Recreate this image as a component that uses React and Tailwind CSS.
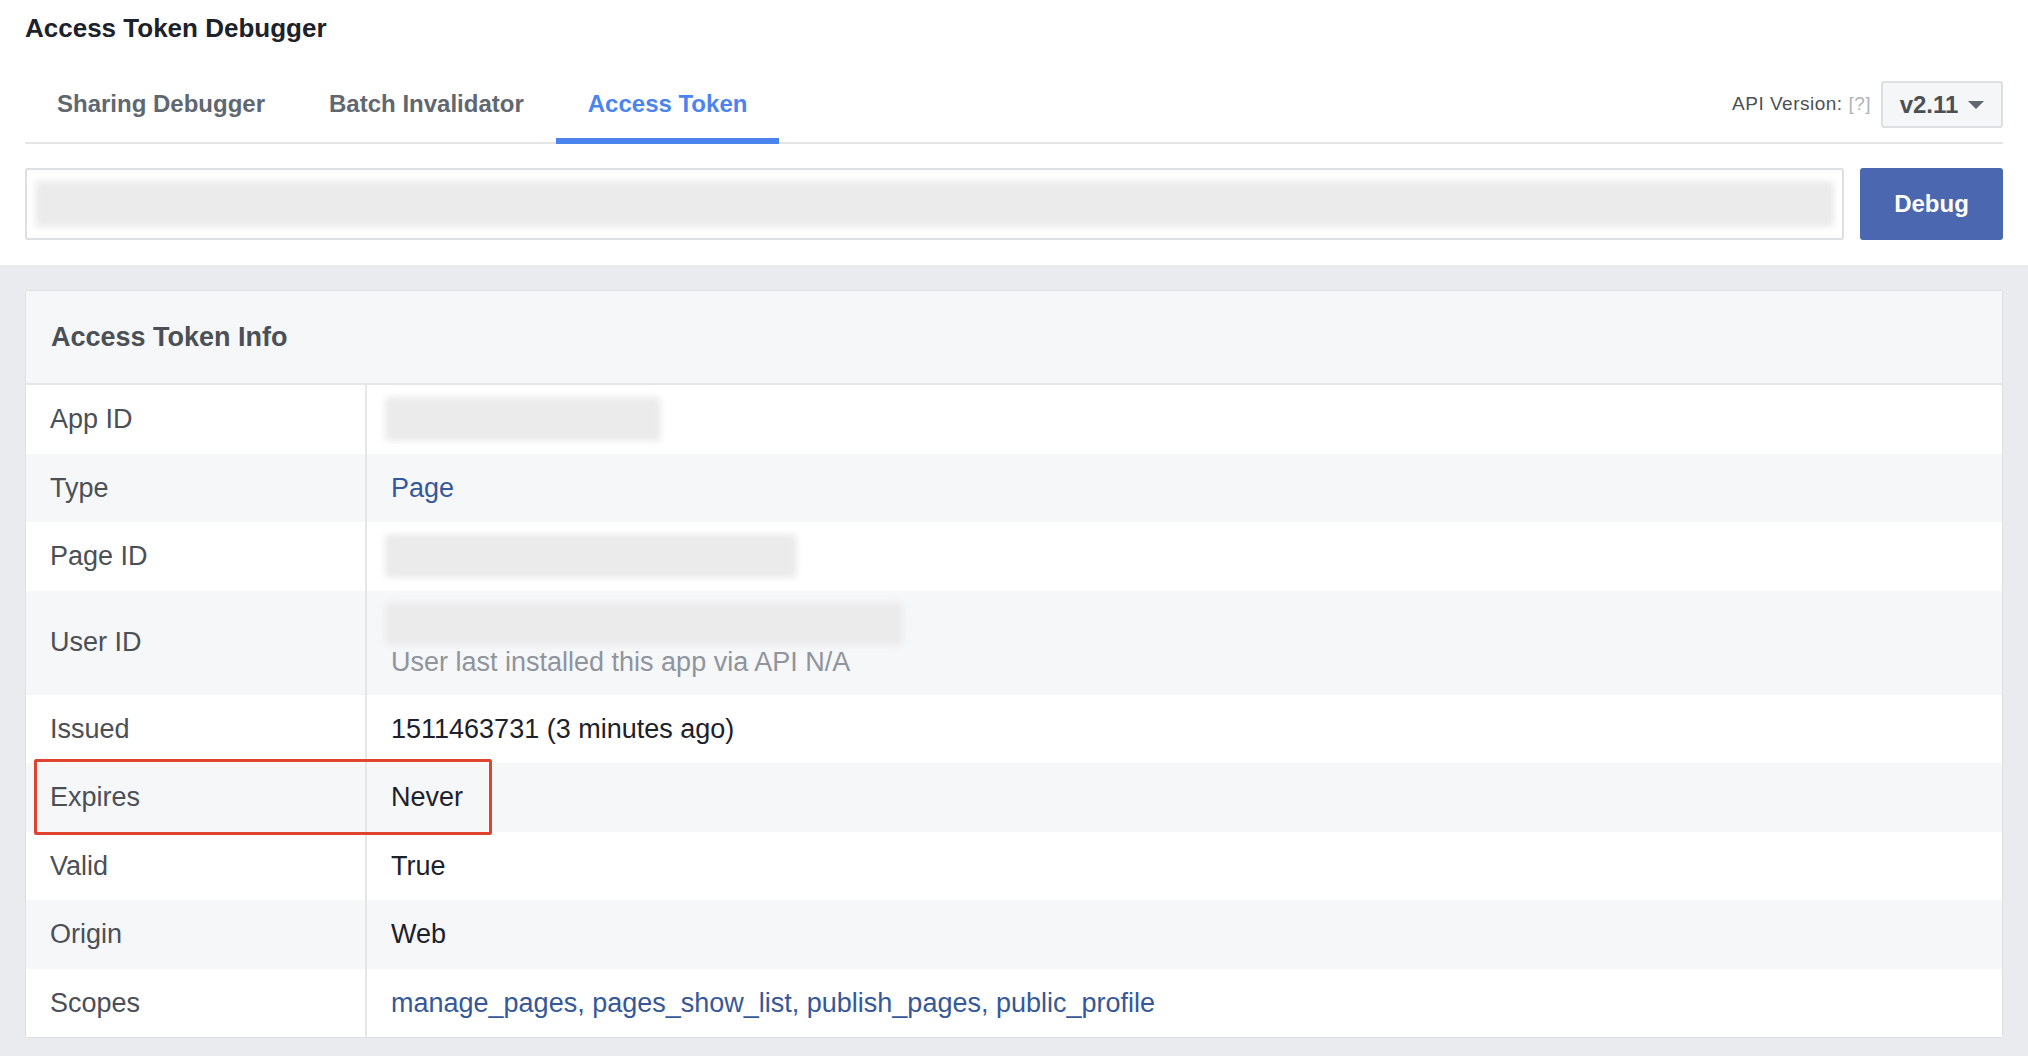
import React from "react";

const Blur = ({ w }) => (
  <div className={`h-[44px] ${w} bg-[#ebebeb] rounded-sm blur-[3px]`} />
);

const rows = [
  { label: "App ID", value: <Blur w="w-[276px]" />, blur: true },
  { label: "Type", value: <span className="text-[#365899]">Page</span> },
  { label: "Page ID", value: <Blur w="w-[412px]" />, blur: true },
  {
    label: "User ID",
    tall: true,
    blur: true,
    value: (
      <div className="flex flex-col">
        <Blur w="w-[518px]" />
        <span className="text-[#90949c] -mt-[4px] pl-[6px]">User last installed this app via API N/A</span>
      </div>
    ),
  },
  { label: "Issued", value: "1511463731 (3 minutes ago)" },
  { label: "Expires", value: "Never", marked: true },
  { label: "Valid", value: "True" },
  { label: "Origin", value: "Web" },
  {
    label: "Scopes",
    value: <span className="text-[#365899]">manage_pages, pages_show_list, publish_pages, public_profile</span>,
  },
];

export default function App() {
  return (
    <div
      className="w-[2028px] h-[1056px] bg-[#e9ebee] text-[#1d2129]"
      style={{ fontFamily: '"Liberation Sans", Arial, sans-serif' }}
    >
      <div className="bg-white px-[25px] pb-[25px]">
        <h1 className="text-[26px] font-bold pt-[12px] h-[62px] leading-[32px]">Access Token Debugger</h1>
        <div className="flex items-end justify-between border-b-2 border-[#e5e5e5] h-[82px]">
          <div className="flex text-[24px] font-bold text-[#606770]">
            <div className="px-[32px] pb-[20px]">Sharing Debugger</div>
            <div className="px-[32px] pb-[20px]">Batch Invalidator</div>
            <div className="px-[32px] pb-[16px] text-[#4c84ef] border-b-[6px] border-[#4c84ef] -mb-[2px]">Access Token</div>
          </div>
          <div className="flex items-center gap-[10px] mb-[14px]">
            <span className="text-[19px] text-[#4b4f56] tracking-[0.5px]">
              API Version: <span className="text-[#b0b3b8]">[?]</span>
            </span>
            <div className="w-[122px] h-[47px] border-2 border-[#dddfe2] rounded-[3px] bg-[#f5f6f7] flex items-center justify-center gap-[10px]">
              <span className="text-[24px] font-bold text-[#4b4f56]">v2.11</span>
              <span className="w-0 h-0 border-l-[8px] border-r-[8px] border-t-[8px] border-l-transparent border-r-transparent border-t-[#606770]" />
            </div>
          </div>
        </div>
        <div className="flex gap-[16px] mt-[24px]">
          <div className="flex-1 h-[72px] border-2 border-[#dddfe2] rounded-[3px] flex items-center px-[8px]">
            <div className="w-full h-[46px] bg-[#ebebeb] blur-[3px]" />
          </div>
          <button className="w-[143px] h-[72px] bg-[#4b67af] rounded-[3px] text-white text-[24px] font-bold">Debug</button>
        </div>
      </div>
      <div className="px-[25px] pt-[25px]">
        <div className="bg-white border border-[#dddfe2] rounded-[3px]">
          <div className="h-[94px] bg-[#f6f7f9] border-b-2 border-[#e5e6e9] flex items-center px-[25px] text-[27px] font-bold text-[#4b4f56]">
            Access Token Info
          </div>
          {rows.map((r, i) => (
            <div
              key={r.label}
              className={`relative flex text-[27px] ${i % 2 ? "bg-[#f6f7f9]" : "bg-white"} ${r.tall ? "h-[104px]" : "h-[68.5px]"}`}
            >
              <div className="w-[341px] border-r-2 border-[#e5e6e9] flex items-center px-[24px] text-[#4b4f56]">{r.label}</div>
              <div className="flex-1 flex items-center px-[18px]">
                <div className={r.blur ? "" : "pl-[6px]"}>{r.value}</div>
              </div>
              {r.marked && (
                <div className="absolute z-10 left-[8px] top-[-4px] w-[458px] h-[76px] border-[3px] border-[#e0442e] rounded-[2px]" />
              )}
            </div>
          ))}
        </div>
      </div>
    </div>
  );
}
